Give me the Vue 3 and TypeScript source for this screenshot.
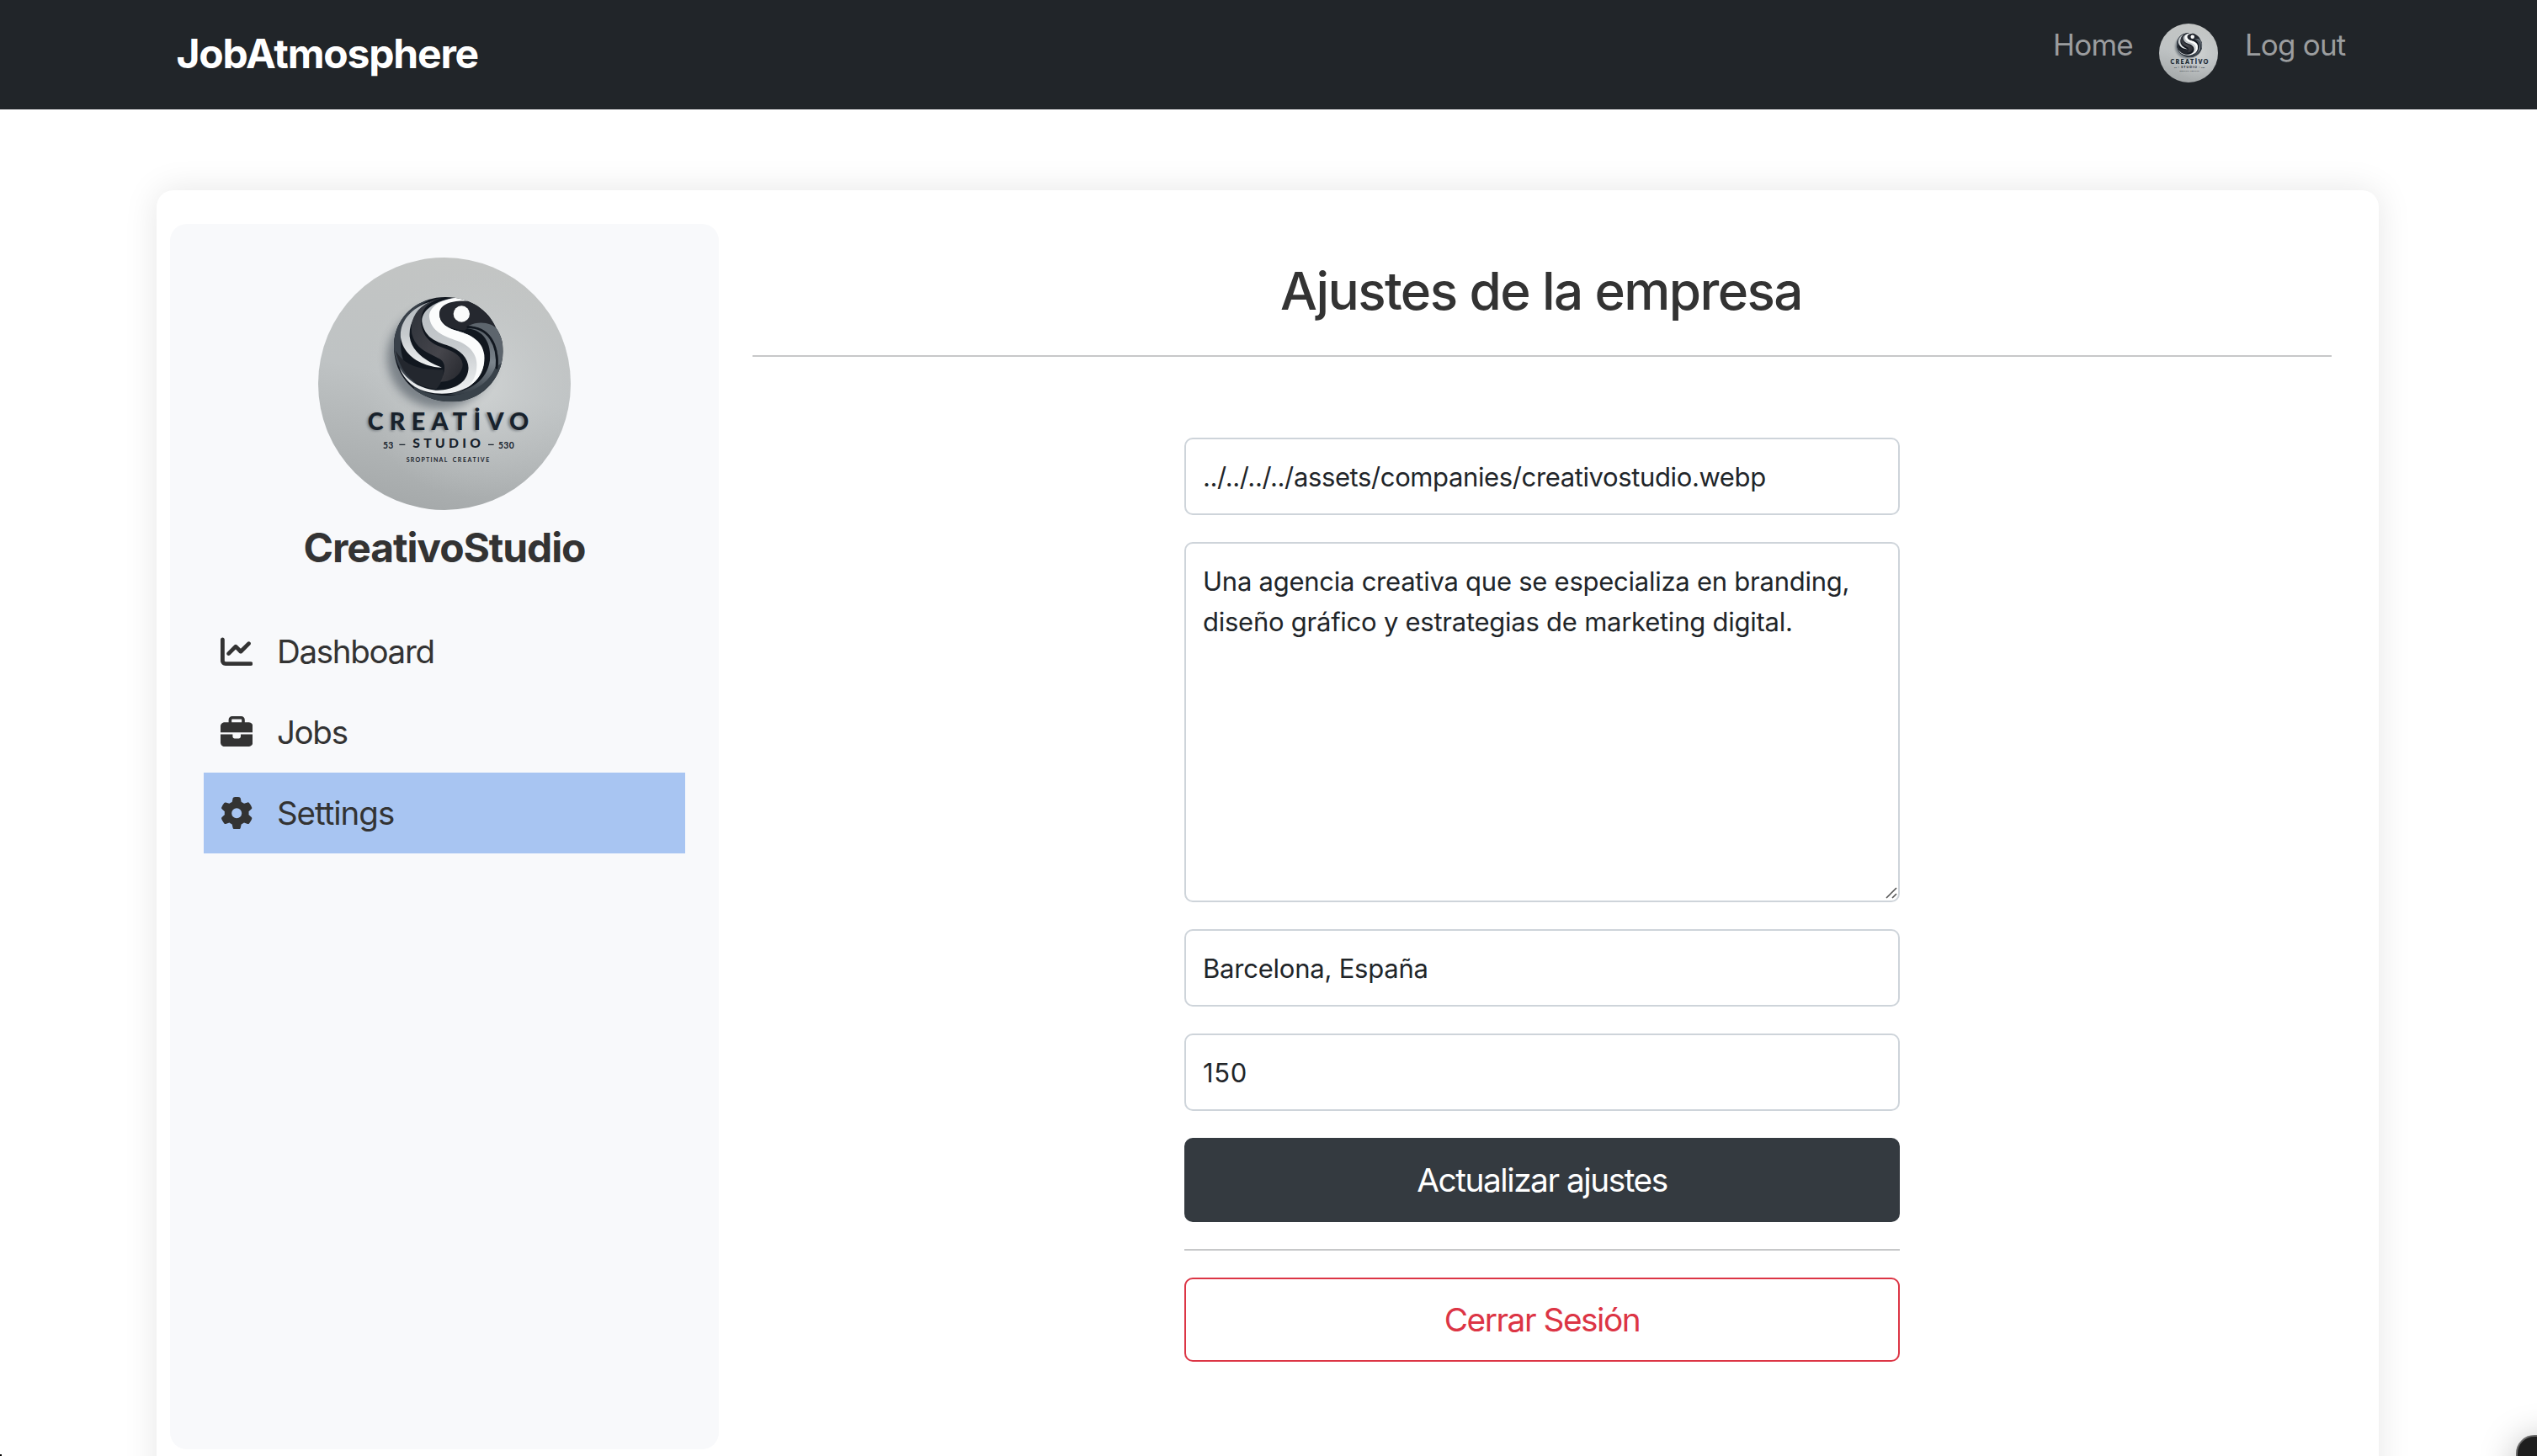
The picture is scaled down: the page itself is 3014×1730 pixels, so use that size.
<script setup lang="ts">
import { reactive } from 'vue'

interface MenuItem {
  label: string
  icon: string
  active?: boolean
}

const menu: MenuItem[] = [
  {
    label: 'Dashboard',
    icon: 'M64 64c0-17.7-14.3-32-32-32S0 46.3 0 64V400c0 44.2 35.8 80 80 80H480c17.7 0 32-14.3 32-32s-14.3-32-32-32H80c-8.8 0-16-7.2-16-16V64zm406.6 86.6c12.5-12.5 12.5-32.8 0-45.3s-32.8-12.5-45.3 0L320 210.7l-57.4-57.4c-12.5-12.5-32.8-12.5-45.3 0l-112 112c-12.5 12.5-12.5 32.8 0 45.3s32.8 12.5 45.3 0L240 221.3l57.4 57.4c12.5 12.5 32.8 12.5 45.3 0l128-128z',
  },
  {
    label: 'Jobs',
    icon: 'M184 48l144 0c4.4 0 8 3.6 8 8l0 40L176 96l0-40c0-4.4 3.6-8 8-8zm-56 8l0 40L64 96C28.7 96 0 124.7 0 160l0 96 192 0 128 0 192 0 0-96c0-35.3-28.7-64-64-64l-64 0 0-40c0-30.9-25.1-56-56-56L184 0c-30.9 0-56 25.1-56 56zM512 288l-192 0 0 32c0 17.7-14.3 32-32 32l-64 0c-17.7 0-32-14.3-32-32l0-32L0 288 0 416c0 35.3 28.7 64 64 64l384 0c35.3 0 64-28.7 64-64l0-128z',
  },
  {
    label: 'Settings',
    icon: 'M495.9 166.6c3.2 8.7 .5 18.4-6.4 24.6l-43.3 39.4c1.1 8.3 1.7 16.8 1.7 25.4s-.6 17.1-1.7 25.4l43.3 39.4c6.9 6.2 9.6 15.9 6.4 24.6c-4.4 11.9-9.7 23.3-15.8 34.3l-4.7 8.1c-6.6 11-14 21.4-22.1 31.2c-5.9 7.2-15.7 9.6-24.5 6.8l-55.7-17.7c-13.4 10.3-28.2 18.9-44 25.4l-12.5 57.1c-2 9.1-9 16.3-18.2 17.8c-13.8 2.3-28 3.5-42.5 3.5s-28.7-1.2-42.5-3.5c-9.2-1.5-16.2-8.7-18.2-17.8l-12.5-57.1c-15.8-6.5-30.6-15.1-44-25.4L83.1 425.9c-8.8 2.8-18.6 .3-24.5-6.8c-8.1-9.8-15.5-20.2-22.1-31.2l-4.7-8.1c-6.1-11-11.4-22.4-15.8-34.3c-3.2-8.7-.5-18.4 6.4-24.6l43.3-39.4C64.6 273.1 64 264.6 64 256s.6-17.1 1.7-25.4L22.4 191.2c-6.9-6.2-9.6-15.9-6.4-24.6c4.4-11.9 9.7-23.3 15.8-34.3l4.7-8.1c6.6-11 14-21.4 22.1-31.2c5.9-7.2 15.7-9.6 24.5-6.8l55.7 17.7c13.4-10.3 28.2-18.9 44-25.4l12.5-57.1c2-9.1 9-16.3 18.2-17.8C227.3 1.2 241.5 0 256 0s28.7 1.2 42.5 3.5c9.2 1.5 16.2 8.7 18.2 17.8l12.5 57.1c15.8 6.5 30.6 15.1 44 25.4l55.7-17.7c8.8-2.8 18.6-.3 24.5 6.8c8.1 9.8 15.5 20.2 22.1 31.2l4.7 8.1c6.1 11 11.4 22.4 15.8 34.3zM256 336a80 80 0 1 0 0-160 80 80 0 1 0 0 160z',
    active: true,
  },
]

const form = reactive({
  logo: '../../../../assets/companies/creativostudio.webp',
  description:
    'Una agencia creativa que se especializa en branding, diseño gráfico y estrategias de marketing digital.',
  location: 'Barcelona, España',
  employees: '150',
})
</script>

<template>
  <div class="page">
    <header class="navbar">
      <a class="brand">JobAtmosphere</a>
      <nav class="links">
        <a class="link">Home</a>
        <svg class="avatar" viewBox="0 0 300 300">
          <defs>
            <linearGradient id="wall" x1="0.6" y1="0" x2="0.4" y2="1">
              <stop offset="0" stop-color="#c3c5c4" />
              <stop offset="0.5" stop-color="#bfc3c4" />
              <stop offset="1" stop-color="#a5a9aa" />
            </linearGradient>
            <radialGradient id="glow" cx="0.62" cy="0.5" r="0.45">
              <stop offset="0" stop-color="#d3d6d6" stop-opacity="0.9" />
              <stop offset="1" stop-color="#c4c8c9" stop-opacity="0" />
            </radialGradient>
            <linearGradient id="ribbon" x1="0" y1="0" x2="1" y2="1">
              <stop offset="0" stop-color="#2b3038" />
              <stop offset="0.6" stop-color="#45454b" />
              <stop offset="1" stop-color="#25272d" />
            </linearGradient>
            <linearGradient id="silver" x1="0" y1="0" x2="0" y2="1">
              <stop offset="0" stop-color="#b4babf" />
              <stop offset="0.5" stop-color="#c6cacd" />
              <stop offset="1" stop-color="#f0f2f3" />
            </linearGradient>
            <linearGradient id="steel" x1="0.3" y1="0" x2="0.2" y2="1">
              <stop offset="0" stop-color="#5a626a" />
              <stop offset="0.45" stop-color="#7b848c" />
              <stop offset="1" stop-color="#333b43" />
            </linearGradient>
            <filter id="soft" x="-30%" y="-30%" width="160%" height="160%">
              <feGaussianBlur stdDeviation="16" />
            </filter>
            <filter id="softText" x="-10%" y="-30%" width="120%" height="160%">
              <feGaussianBlur stdDeviation="4" />
            </filter>
            <clipPath id="orb">
              <path d="M24 200C24 98 104 24 208 24C296 24 362 72 387 133C406 160 413 184 413 218C410 320 330 397 232 397C112 397 24 312 24 200Z" />
            </clipPath>
            <clipPath id="disc"><circle cx="150" cy="150" r="150" /></clipPath>
            <symbol id="creativo-logo" viewBox="0 0 300 300">
              <g clip-path="url(#disc)">
                <rect width="300" height="300" fill="url(#wall)" />
                <rect width="300" height="300" fill="url(#glow)" />
                <g transform="translate(82 39) scale(0.33333)">
                  <ellipse cx="190" cy="240" rx="190" ry="180" fill="#4c555e" opacity="0.6" filter="url(#soft)" />
                  <g clip-path="url(#orb)">
                    <rect width="430" height="420" fill="#11171f" />
                    <path d="M24 150C10 240 60 340 150 380C90 330 45 260 48 180C52 110 90 60 150 35C80 50 35 90 24 150Z" fill="#39414a" />
                    <path d="M165 38C90 55 43 110 48 168C58 232 120 272 195 275C150 258 88 225 80 165C76 110 112 62 165 38Z" fill="url(#silver)" />
                    <path d="M30 215C60 268 120 285 200 283C200 310 196 330 175 352C100 345 50 300 30 215Z" fill="#23272e" />
                    <path d="M195 26C110 45 78 100 88 155C102 212 150 222 190 246C212 262 206 292 190 326C235 326 268 296 269 264C265 225 222 213 180 197C128 176 112 120 124 84C136 50 165 36 195 26Z" fill="url(#ribbon)" />
                    <path d="M245 26C165 36 120 75 124 112C132 163 165 180 212 195C268 213 297 252 288 290C278 335 235 353 180 356C150 356 80 340 44 276C66 335 120 368 195 368C290 368 350 310 345 235C338 175 290 155 245 143C200 130 178 105 188 80Z" fill="url(#silver)" />
                    <path d="M250 26C180 33 148 65 150 95C156 145 200 162 250 180C305 200 326 240 318 285C314 312 300 335 278 350C325 325 350 285 346 230C340 175 290 155 245 143C200 130 183 105 188 80C194 50 225 40 300 38Z" fill="#fbfcfc" />
                    <path d="M186 82C188 48 232 34 290 38C345 58 380 95 390 134C350 110 310 115 276 143C230 140 184 122 186 82Z" fill="#25282f" />
                    <path d="M284 136C345 140 372 190 366 250C354 325 300 355 215 372C330 378 392 310 393 230C390 165 345 126 284 136Z" fill="url(#steel)" />
                    <path d="M290 126C330 106 375 118 390 136C425 180 418 260 392 290C404 220 385 140 290 126Z" fill="#5d656d" />
                    <path d="M95 345C190 400 340 380 385 275L420 250L400 400H100Z" fill="#39424a" />
                    <path d="M284 131C360 130 398 190 390 280" fill="none" stroke="#11171f" stroke-width="8" />
                  </g>
                  <circle cx="265" cy="84" r="29" fill="#fafbfb" />
                </g>
                <g transform="translate(52 169) scale(0.33333)" class="mark">
                  <text x="16" y="112" textLength="571" font-size="86" opacity="0.4" filter="url(#softText)">CREATİVO</text>
                  <text x="20" y="107" textLength="575" font-size="86">CREATİVO</text>
                  <text x="181" y="171" textLength="242" font-size="47">STUDIO</text>
                  <g class="thin">
                    <text x="75" y="173" textLength="37" font-size="31">53</text>
                    <text x="486" y="173" textLength="56" font-size="31">530</text>
                    <text x="158" y="222" textLength="146" font-size="21">SROPTINAL</text>
                    <text x="323" y="222" textLength="131" font-size="21">CREATIVE</text>
                  </g>
                  <path d="M133 160h21M450 160h20" stroke="#18222c" stroke-width="4" />
                </g>
              </g>
            </symbol>
          </defs>
          <use href="#creativo-logo" width="300" height="300" />
        </svg>
        <a class="link">Log out</a>
      </nav>
    </header>

    <main class="card">
      <aside class="sidebar">
        <svg class="logo" viewBox="0 0 300 300">
          <use href="#creativo-logo" width="300" height="300" />
        </svg>
        <h2 class="company">CreativoStudio</h2>
        <ul class="menu">
          <li v-for="item in menu" :key="item.label" class="menu-item" :class="{ active: item.active }">
            <svg class="icon" viewBox="0 0 512 512"><path :d="item.icon" /></svg>
            <span>{{ item.label }}</span>
          </li>
        </ul>
      </aside>

      <section class="content">
        <h1 class="title">Ajustes de la empresa</h1>
        <hr class="rule" />
        <form class="form" @submit.prevent>
          <input v-model="form.logo" class="field path" type="text" />
          <div class="area-wrap">
            <textarea v-model="form.description" class="field area" spellcheck="false"></textarea>
            <svg class="grip" viewBox="0 0 16 16"><path d="M2 14L14 2M9 14L14 9" /></svg>
          </div>
          <input v-model="form.location" class="field" type="text" />
          <input v-model="form.employees" class="field number" type="text" />
          <button class="btn dark" type="submit">Actualizar ajustes</button>
          <hr class="rule" />
          <button class="btn danger" type="button">Cerrar Sesión</button>
        </form>
      </section>
    </main>

    <div class="widget"></div>
    <div class="nub"></div>
  </div>
</template>

<style>
body {
  background: #fff;
  overflow: hidden;
}
</style>

<style scoped>
.page {
  position: relative;
  width: 3014px;
  height: 1730px;
  overflow: hidden;
  background: #fff;
  color: #333;
  font-family: Inter, "Liberation Sans", sans-serif;
}
.navbar {
  display: flex;
  justify-content: space-between;
  align-items: flex-start;
  box-sizing: border-box;
  height: 130px;
  padding: 28px 227.5px 0 209.5px;
  background: #212529;
}
.brand {
  color: #fff;
  font-size: 48px;
  font-weight: 700;
  line-height: 71px;
  letter-spacing: -1.2px;
}
.links {
  display: flex;
  align-items: flex-start;
  gap: 31.5px;
}
.link {
  padding-top: 1px;
  color: #9b9d9f;
  font-size: 35px;
  line-height: 48px;
  letter-spacing: -0.8px;
}
.avatar {
  display: block;
  width: 70px;
  height: 70px;
}
.mark {
  fill: #18222c;
  font-family: Lato, sans-serif;
  font-weight: 900;
}
.thin {
  font-weight: 700;
}
.card {
  display: flex;
  align-items: flex-start;
  box-sizing: border-box;
  width: 2640px;
  height: 1600px;
  margin: 96px 0 0 186px;
  padding: 0 56px 0 16px;
  border-radius: 20px;
  background: #fff;
  box-shadow: 0 0 40px rgba(0, 0, 0, 0.1);
}
.sidebar {
  display: flex;
  flex: none;
  flex-direction: column;
  align-items: center;
  box-sizing: border-box;
  width: 652px;
  height: 1456px;
  margin-top: 40px;
  padding: 40px;
  border-radius: 20px;
  background: #f8f9fb;
}
.logo {
  display: block;
  width: 300px;
  height: 300px;
}
.company {
  margin: 16px 0 46px;
  font-size: 48px;
  font-weight: 700;
  line-height: 58px;
  letter-spacing: -1.1px;
}
.menu {
  align-self: stretch;
  margin: 0;
  padding: 0;
  list-style: none;
}
.menu-item {
  display: flex;
  align-items: center;
  gap: 28.5px;
  height: 96px;
  padding: 0 20px;
  font-size: 38.5px;
  letter-spacing: -1.3px;
}
.menu-item.active {
  background: #a8c5f2;
  letter-spacing: -1px;
}
.icon {
  width: 38.4px;
  height: 38.4px;
  fill: #333;
}
.content {
  display: flex;
  flex: 1;
  flex-direction: column;
  margin-left: 40px;
  padding-top: 82px;
}
.title {
  margin: 0 2px 38px 0;
  font-size: 62px;
  font-weight: 500;
  line-height: 76px;
  letter-spacing: -1.6px;
  text-align: center;
}
.rule {
  align-self: stretch;
  width: auto;
  height: 2px;
  margin: 0;
  border: 0;
  background: #c7c8c9;
}
.form {
  display: flex;
  flex-direction: column;
  gap: 32px;
  width: 850px;
  margin: 96px auto 0;
}
.field {
  display: block;
  box-sizing: border-box;
  width: 100%;
  height: 92px;
  margin: 0;
  padding: 0 20px;
  border: 2px solid #ced4da;
  border-radius: 10px;
  outline: 0;
  background: #fff;
  color: #212529;
  font-family: inherit;
  font-size: 31px;
  line-height: 48px;
  letter-spacing: -0.22px;
}
.path {
  letter-spacing: -0.38px;
}
.number {
  letter-spacing: 0.6px;
}
.area-wrap {
  position: relative;
}
.area {
  height: 428px;
  padding-top: 21px;
  overflow: hidden;
  resize: none;
  letter-spacing: -0.25px;
}
.grip {
  position: absolute;
  right: 2px;
  bottom: 3px;
  width: 16px;
  height: 16px;
  fill: none;
  stroke: #555;
  stroke-width: 1.6;
}
.btn {
  box-sizing: border-box;
  width: 100%;
  height: 100px;
  padding: 0;
  border: 2px solid;
  border-radius: 10px;
  font-family: inherit;
  font-size: 38.8px;
  line-height: 60px;
  letter-spacing: -1.47px;
}
.dark {
  border-color: #343a40;
  background: #343a40;
  color: #fff;
}
.danger {
  border-color: #dc3545;
  background: #fff;
  color: #dc3545;
}
.widget {
  position: absolute;
  top: 1705px;
  left: 2989px;
  width: 100px;
  height: 100px;
  box-sizing: border-box;
  border: 2px solid #6a6a6a;
  border-radius: 22px;
  background: #1e1e1e;
  box-shadow: 0 6px 44px rgba(0, 0, 0, 0.28);
}
.nub {
  position: absolute;
  bottom: 0;
  left: 0;
  width: 2px;
  height: 2px;
  background: #000;
}
</style>
